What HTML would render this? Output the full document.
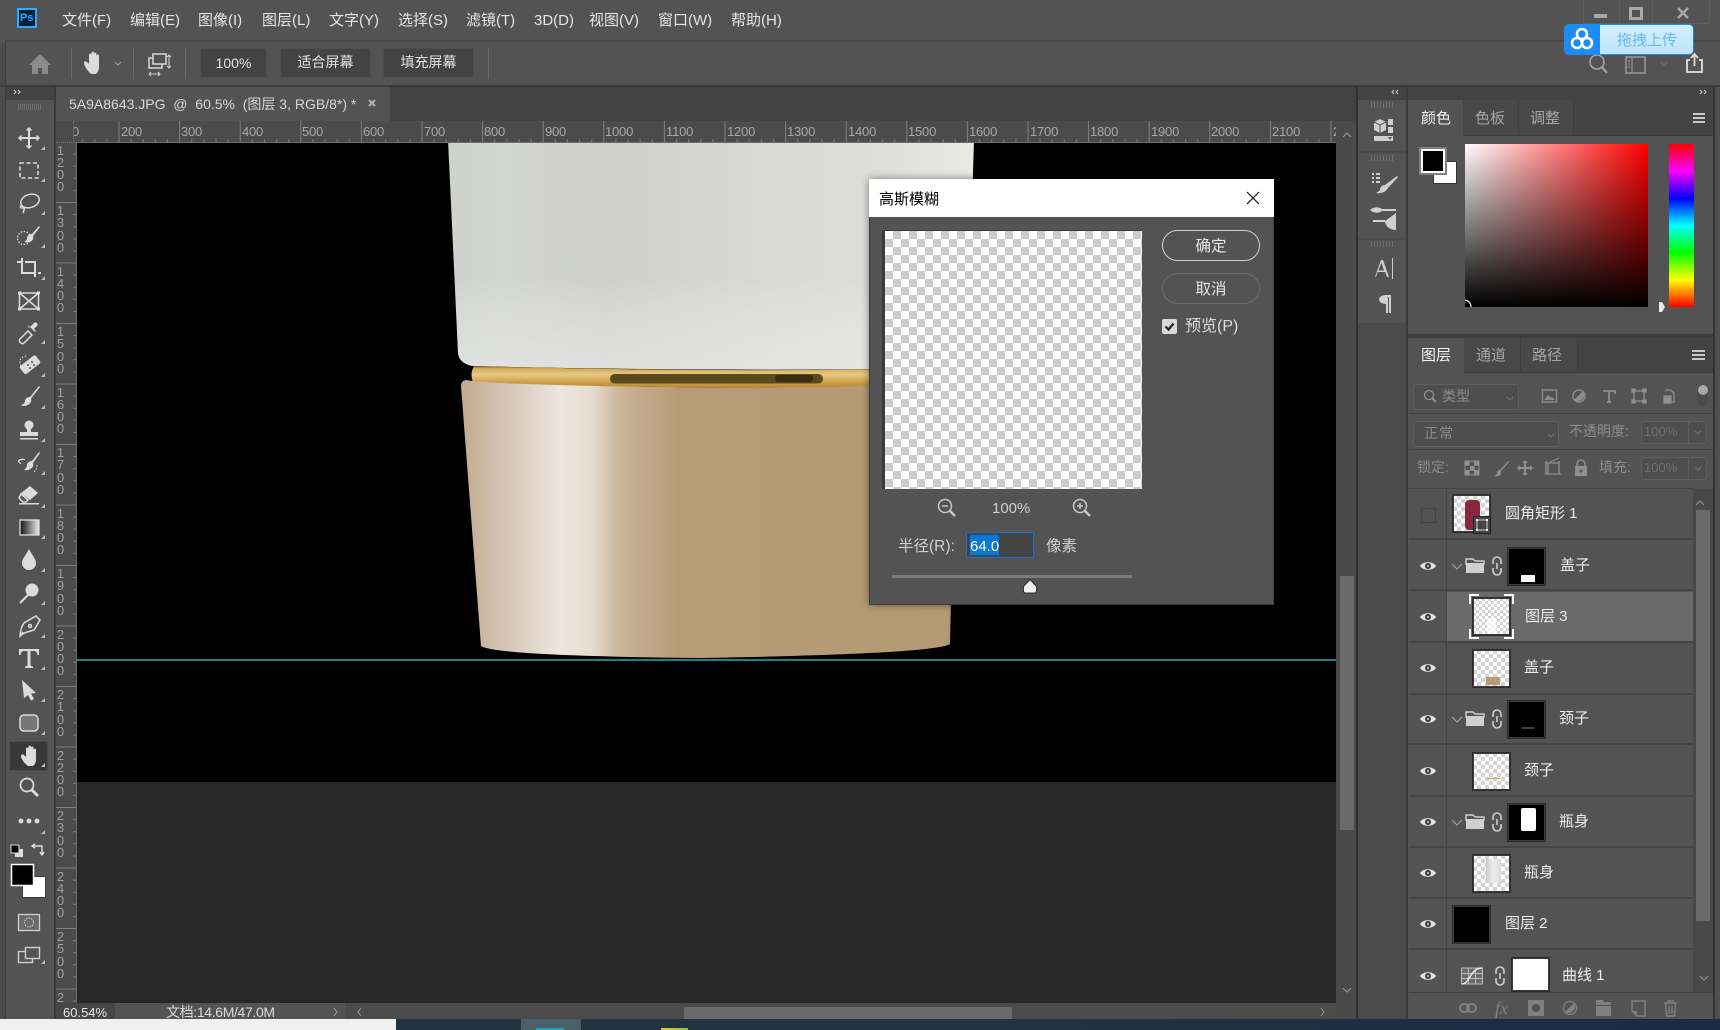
<!DOCTYPE html>
<html lang="zh"><head><meta charset="utf-8"><title>Photoshop</title>
<style>
html,body{margin:0;padding:0;width:1720px;height:1030px;overflow:hidden;background:#535353}
body{position:relative;font-family:"Liberation Sans","Noto Sans CJK SC",sans-serif;color:#e4e4e4;font-size:15px}
.b{position:absolute;box-sizing:border-box}
.t{position:absolute;white-space:nowrap;line-height:20px}
.dim{color:#8c8c8c}
.btn{position:absolute;box-sizing:border-box;background:#434343;border:1px solid #4e4e4e;border-radius:2px;text-align:center;line-height:27px;height:30px;top:48px;color:#e2e2e2;font-size:14px}
#hr span{position:absolute;top:2px;line-height:18px;font-size:13px;color:#a8a8a8;letter-spacing:-.2px}
#vr div{position:absolute;left:0;width:9px;text-align:center;font-size:13px;line-height:12.3px;color:#a0a0a0}
.thumb{position:absolute;box-sizing:border-box;width:39px;height:39px;border:1px solid #2c2c2c;box-shadow:inset 0 0 0 1px #3a3a3a;background:repeating-conic-gradient(#d4d4d4 0 25%,#fff 0 50%) 0 0/8px 8px}
.sep{position:absolute;left:1409px;width:284px;height:2px;background:#444}
.rt{position:absolute;white-space:nowrap;line-height:20px;font-size:15px;color:#ececec}
svg{position:absolute;left:0;top:0}
</style></head><body>

<!-- title + options bars -->
<div class="b" style="left:0;top:0;width:1720px;height:41px;background:#535353"></div>
<div class="b" style="left:5px;top:40px;width:1715px;height:2px;background:#464646"></div>
<div class="b" style="left:0;top:42px;width:5px;height:988px;background:#4c4c4c"></div>
<div class="b" style="left:5px;top:42px;width:1px;height:980px;background:#3c3c3c"></div>
<div class="b" style="left:6px;top:42px;width:1714px;height:43px;background:#535353"></div>
<div class="b" style="left:0;top:85px;width:1720px;height:2px;background:#3a3a3a"></div>

<!-- menu -->
<div class="b" style="left:17px;top:8px;width:20px;height:20px;background:#001e36;border:2px solid #31a8ff"></div>
<div class="t" style="left:20px;top:8px;font-size:11px;font-weight:700;color:#31a8ff">Ps</div>
<div class="t" style="left:62px;top:11px">文件(F)</div>
<div class="t" style="left:130px;top:11px">编辑(E)</div>
<div class="t" style="left:198px;top:11px">图像(I)</div>
<div class="t" style="left:262px;top:11px">图层(L)</div>
<div class="t" style="left:329px;top:11px">文字(Y)</div>
<div class="t" style="left:398px;top:11px">选择(S)</div>
<div class="t" style="left:466px;top:11px">滤镜(T)</div>
<div class="t" style="left:534px;top:11px">3D(D)</div>
<div class="t" style="left:589px;top:11px">视图(V)</div>
<div class="t" style="left:658px;top:11px">窗口(W)</div>
<div class="t" style="left:731px;top:11px">帮助(H)</div>

<!-- option buttons -->
<div class="btn" style="left:200px;width:67px;line-height:29px">100%</div>
<div class="btn" style="left:280px;width:91px">适合屏幕</div>
<div class="btn" style="left:383px;width:91px">填充屏幕</div>
<div class="b" style="left:71px;top:48px;width:1px;height:31px;background:#6a6a6a"></div>
<div class="b" style="left:133px;top:48px;width:1px;height:31px;background:#6a6a6a"></div>
<div class="b" style="left:185px;top:48px;width:1px;height:31px;background:#6a6a6a"></div>
<div class="b" style="left:488px;top:48px;width:1px;height:31px;background:#6a6a6a"></div>

<!-- window ctrl -->
<div class="b" style="left:1583px;top:0;width:127px;height:24px;border:1px solid #5f5f5f;border-top:0;border-radius:0 0 3px 3px"></div>
<div class="b" style="left:1619px;top:0;width:1px;height:24px;background:#5f5f5f"></div>
<div class="b" style="left:1652px;top:0;width:1px;height:24px;background:#5f5f5f"></div>
<!-- baidu -->
<div class="b" style="left:1564px;top:24px;width:130px;height:31px;background:#1b8df5;border-radius:5px;z-index:3"></div>
<div class="b" style="left:1600px;top:25px;width:93px;height:29px;background:linear-gradient(#d4effc,#bfe6fb);border-radius:0 4px 4px 0;z-index:3"></div>
<div class="t" style="left:1617px;top:31px;color:#66b8f3;font-size:15px;z-index:3">拖拽上传</div>

<!-- tool panel -->
<div class="b" style="left:6px;top:87px;width:48px;height:13px;background:#434343"></div>
<div class="b" style="left:6px;top:100px;width:48px;height:919px;background:#535353"></div>
<div class="b" style="left:54px;top:87px;width:2px;height:932px;background:#383838"></div>
<div class="b" style="left:9px;top:741px;width:39px;height:30px;background:#383838;border:1px solid #4a4a4a;border-radius:2px"></div>

<!-- doc area -->
<div class="b" style="left:56px;top:87px;width:1300px;height:34px;background:#424242"></div>
<div class="b" style="left:56px;top:87px;width:334px;height:34px;background:#535353"></div>
<div class="t" style="left:69px;top:94px;font-size:14px;color:#d6d6d6">5A9A8643.JPG&nbsp; @&nbsp; 60.5%&nbsp; (图层 3, RGB/8*) *</div>

<!-- rulers -->
<div class="b" style="left:56px;top:121px;width:1300px;height:22px;background:#4b4b4b"></div>
<div class="b" style="left:56px;top:143px;width:21px;height:860px;background:#4b4b4b"></div>
<div id="hr" class="b" style="left:74px;top:121px;width:1262px;height:22px;overflow:hidden">
<svg width="1262" height="22"><defs><pattern id="ph" x="-16.1" width="60.6" height="22" patternUnits="userSpaceOnUse"><path d="M.5 0V22M12.6 18V22M24.7 18V22M36.9 18V22M49 18V22" stroke="#7f7f7f" fill="none"/></pattern></defs><rect width="1262" height="22" fill="url(#ph)"/><rect y="21" width="1262" height="1" fill="#6e6e6e"/></svg>
<span style="left:-16px">100</span><span style="left:47px">200</span><span style="left:107px">300</span><span style="left:168px">400</span><span style="left:228px">500</span><span style="left:289px">600</span><span style="left:350px">700</span><span style="left:410px">800</span><span style="left:471px">900</span><span style="left:531px">1000</span><span style="left:592px">1100</span><span style="left:653px">1200</span><span style="left:713px">1300</span><span style="left:774px">1400</span><span style="left:834px">1500</span><span style="left:895px">1600</span><span style="left:956px">1700</span><span style="left:1016px">1800</span><span style="left:1077px">1900</span><span style="left:1137px">2000</span><span style="left:1198px">2100</span><span style="left:1259px">2200</span>
</div>
<div id="vr" class="b" style="left:56px;top:143px;width:21px;height:860px;overflow:hidden">
<svg width="21" height="860"><defs><pattern id="pv" y="-1.5" width="21" height="60.5" patternUnits="userSpaceOnUse"><path d="M0 .5H21M17 12.6H21M17 24.7H21M17 36.8H21M17 49H21" stroke="#7f7f7f" fill="none"/></pattern></defs><rect width="21" height="860" fill="url(#pv)"/><rect x="20" width="1" height="860" fill="#6e6e6e"/></svg>
<div style="top:1.5px">1<br>2<br>0<br>0</div><div style="top:62px">1<br>3<br>0<br>0</div><div style="top:122.5px">1<br>4<br>0<br>0</div><div style="top:183px">1<br>5<br>0<br>0</div><div style="top:243.5px">1<br>6<br>0<br>0</div><div style="top:304px">1<br>7<br>0<br>0</div><div style="top:364.5px">1<br>8<br>0<br>0</div><div style="top:425px">1<br>9<br>0<br>0</div><div style="top:485.5px">2<br>0<br>0<br>0</div><div style="top:546px">2<br>1<br>0<br>0</div><div style="top:606.5px">2<br>2<br>0<br>0</div><div style="top:667px">2<br>3<br>0<br>0</div><div style="top:727.5px">2<br>4<br>0<br>0</div><div style="top:788px">2<br>5<br>0<br>0</div><div style="top:848.5px">2<br>6<br>0<br>0</div>
</div>
<div class="b" style="left:56px;top:121px;width:18px;height:22px;background:#4b4b4b;border-right:1px dotted #777;border-bottom:1px dotted #777"></div>

<!-- canvas -->
<div class="b" style="left:77px;top:143px;width:1259px;height:639px;background:#000"></div>
<div class="b" style="left:77px;top:782px;width:1259px;height:221px;background:#282828"></div>

<!-- canvas scrollbar -->
<div class="b" style="left:1336px;top:121px;width:20px;height:898px;background:#4a4a4a"></div>
<div class="b" style="left:1340px;top:576px;width:14px;height:254px;background:#6a6a6a"></div>
<div class="b" style="left:1356px;top:87px;width:2px;height:932px;background:#2f2f2f"></div>

<!-- status bar -->
<div class="b" style="left:56px;top:1003px;width:59px;height:16px;background:#464646"></div>
<div class="b" style="left:115px;top:1003px;width:230px;height:16px;background:#535353"></div>
<div class="b" style="left:345px;top:1003px;width:991px;height:16px;background:#4b4b4b"></div>
<div class="b" style="left:684px;top:1007px;width:328px;height:12px;background:#6a6a6a"></div>
<div class="t" style="left:63px;top:1003px;font-size:13px;line-height:19px;color:#e8e8e8">60.54%</div>
<div class="t" style="left:166px;top:1003px;font-size:14px;line-height:19px;color:#dcdcdc;letter-spacing:-.35px">文档:14.6M/47.0M</div>

<!-- taskbar -->
<div class="b" style="left:0;top:1019px;width:396px;height:11px;background:#f0f0f0;z-index:4"></div>
<div class="b" style="left:396px;top:1019px;width:1324px;height:11px;background:linear-gradient(90deg,#20343f,#1f3340 50%,#1b2a45);z-index:4"></div>
<div class="b" style="left:521px;top:1019px;width:60px;height:11px;background:#4a6068;z-index:4"></div>
<div class="b" style="left:536px;top:1028px;width:28px;height:2px;background:#1fa2b6;z-index:4"></div>
<div class="b" style="left:661px;top:1028px;width:27px;height:2px;background:linear-gradient(90deg,#f0c52a,#8ac63f);z-index:4"></div>
<div class="t" style="left:1695px;top:1026px;color:#fff;font-size:14px;z-index:4">20:</div>

<!-- right dock -->
<div class="b" style="left:1358px;top:87px;width:362px;height:13px;background:#434343"></div>
<div class="b" style="left:1358px;top:100px;width:48px;height:919px;background:#4b4b4b"></div>
<div class="b" style="left:1358px;top:100px;width:48px;height:51px;background:#535353"></div>
<div class="b" style="left:1358px;top:153px;width:48px;height:85px;background:#535353"></div>
<div class="b" style="left:1358px;top:240px;width:48px;height:83px;background:#535353"></div>
<div class="b" style="left:1406px;top:87px;width:2px;height:932px;background:#3a3a3a"></div>
<div class="b" style="left:1408px;top:100px;width:305px;height:234px;background:#535353"></div>
<div class="b" style="left:1713px;top:87px;width:2px;height:932px;background:#333"></div>
<div class="b" style="left:1715px;top:87px;width:5px;height:932px;background:#4f4f4f"></div>

<!-- color panel -->
<div class="b" style="left:1408px;top:100px;width:305px;height:36px;background:#434343;border-bottom:1px solid #3c3c3c"></div>
<div class="b" style="left:1463px;top:100px;width:110px;height:35px;background:#484848"></div>
<div class="b" style="left:1518px;top:100px;width:1px;height:35px;background:#3e3e3e"></div>
<div class="b" style="left:1573px;top:100px;width:1px;height:35px;background:#3e3e3e"></div>
<div class="b" style="left:1408px;top:100px;width:55px;height:37px;background:#535353"></div>
<div class="t" style="left:1421px;top:109px;color:#f2f2f2">颜色</div>
<div class="t dim" style="left:1475px;top:109px;color:#a6a6a6">色板</div>
<div class="t dim" style="left:1530px;top:109px;color:#a6a6a6">调整</div>
<div class="b" style="left:1433px;top:161px;width:24px;height:23px;background:#fff;border:1px solid #333"></div>
<div class="b" style="left:1419px;top:147px;width:28px;height:28px;background:#808080"></div>
<div class="b" style="left:1421px;top:149px;width:24px;height:24px;background:#000;border:2px solid #fff"></div>
<div class="b" style="left:1465px;top:144px;width:183px;height:163px;background:linear-gradient(to top,#000,rgba(0,0,0,0)),linear-gradient(to right,#fff,#f00)"></div>
<div class="b" style="left:1669px;top:144px;width:25px;height:163px;background:linear-gradient(#f00,#f0f,#00f,#0ff,#0f0,#ff0,#f00)"></div>

<!-- layers panel -->
<div class="b" style="left:1408px;top:334px;width:305px;height:4px;background:#3c3c3c"></div>
<div class="b" style="left:1409px;top:338px;width:304px;height:681px;background:#535353"></div>
<div class="b" style="left:1409px;top:338px;width:304px;height:35px;background:#434343;border-bottom:1px solid #3c3c3c"></div>
<div class="b" style="left:1464px;top:338px;width:113px;height:34px;background:#484848"></div>
<div class="b" style="left:1520px;top:338px;width:1px;height:34px;background:#3e3e3e"></div>
<div class="b" style="left:1577px;top:338px;width:1px;height:34px;background:#3e3e3e"></div>
<div class="b" style="left:1409px;top:338px;width:55px;height:36px;background:#535353"></div>
<div class="t" style="left:1421px;top:346px;color:#f2f2f2">图层</div>
<div class="t" style="left:1476px;top:346px;color:#a6a6a6">通道</div>
<div class="t" style="left:1532px;top:346px;color:#a6a6a6">路径</div>

<div class="b" style="left:1413px;top:384px;width:106px;height:26px;border:1px solid #5f5f5f;border-radius:3px;background:#4e4e4e"></div>
<div class="t dim" style="left:1442px;top:386px;font-size:14px">类型</div>
<div class="b" style="left:1409px;top:413px;width:304px;height:1px;background:#434343"></div>
<div class="b" style="left:1413px;top:421px;width:146px;height:26px;border:1px solid #5f5f5f;border-radius:3px;background:#4e4e4e"></div>
<div class="t dim" style="left:1424px;top:423px;font-size:14px;letter-spacing:1px">正常</div>
<div class="t dim" style="left:1569px;top:421px;font-size:14px">不透明度:</div>
<div class="b" style="left:1641px;top:421px;width:66px;height:23px;border:1px solid #5f5f5f;border-radius:3px;background:#4e4e4e"></div>
<div class="b" style="left:1688px;top:421px;width:1px;height:23px;background:#5f5f5f"></div>
<div class="t" style="left:1644px;top:422px;font-size:13px;color:#6f6f6f">100%</div>
<div class="b" style="left:1409px;top:449px;width:304px;height:1px;background:#434343"></div>
<div class="t dim" style="left:1417px;top:457px;font-size:14px">锁定:</div>
<div class="t dim" style="left:1599px;top:457px;font-size:14px">填充:</div>
<div class="b" style="left:1641px;top:457px;width:66px;height:23px;border:1px solid #5f5f5f;border-radius:3px;background:#4e4e4e"></div>
<div class="b" style="left:1688px;top:457px;width:1px;height:23px;background:#5f5f5f"></div>
<div class="t" style="left:1644px;top:458px;font-size:13px;color:#6f6f6f">100%</div>

<!-- layer rows -->
<div class="b" style="left:1409px;top:488px;width:284px;height:1px;background:#444"></div>
<div class="b" style="left:1447px;top:592px;width:246px;height:49px;background:#6a6a6a"></div>
<div class="sep" style="top:538px"></div><div class="sep" style="top:589px"></div><div class="sep" style="top:641px"></div><div class="sep" style="top:693px"></div><div class="sep" style="top:743px"></div><div class="sep" style="top:795px"></div><div class="sep" style="top:846px"></div><div class="sep" style="top:897px"></div><div class="sep" style="top:948px"></div>
<div class="b" style="left:1446px;top:489px;width:1px;height:503px;background:#444"></div>
<div class="b" style="left:1409px;top:992px;width:304px;height:1px;background:#3e3e3e"></div>
<!-- list scrollbar -->
<div class="b" style="left:1693px;top:489px;width:20px;height:503px;background:#484848"></div>
<div class="b" style="left:1696px;top:510px;width:14px;height:411px;background:#6a6a6a"></div>

<div class="b" style="left:1421px;top:508px;width:15px;height:15px;border:1px solid #444"></div>

<div class="thumb" style="left:1452px;top:494px"><div class="b" style="left:12px;top:5px;width:15px;height:30px;background:#8a2740;border-radius:4px"></div></div>
<div class="b" style="left:1473px;top:516px;width:18px;height:18px;background:#444;border:1px solid #222"></div>
<svg width="1720" height="1030" style="z-index:0"><rect x="1477" y="520" width="10" height="10" fill="none" stroke="#cfcfcf"/><path d="M1476 519h2v2h-2zM1486 519h2v2h-2zM1476 529h2v2h-2zM1486 529h2v2h-2z" fill="#eee"/></svg>
<div class="rt" style="left:1505px;top:504px">圆角矩形 1</div>

<div class="thumb" style="left:1507px;top:547px;background:#000"><div class="b" style="left:13px;top:27px;width:14px;height:7px;background:#fff"></div></div>
<div class="rt" style="left:1560px;top:556px">盖子</div>

<div class="thumb" style="left:1472px;top:597px;background-size:6px 6px"><div class="b" style="left:14px;top:20px;width:9px;height:16px;background:rgba(255,255,255,.7)"></div></div>
<div class="b" style="left:1469px;top:594px;width:45px;height:45px;border:2px solid #fff;clip-path:polygon(0 0,10px 0,10px 10px,35px 10px,35px 0,100% 0,100% 10px,35px 10px,35px 35px,100% 35px,100% 100%,35px 100%,35px 35px,10px 35px,10px 100%,0 100%,0 35px,10px 35px,10px 10px,0 10px)"></div>
<div class="rt" style="left:1525px;top:607px">图层 3</div>

<div class="thumb" style="left:1472px;top:649px"><div class="b" style="left:13px;top:27px;width:14px;height:8px;background:#b89c78"></div></div>
<div class="rt" style="left:1524px;top:658px">盖子</div>

<div class="thumb" style="left:1507px;top:700px;background:#000"><div class="b" style="left:14px;top:26px;width:12px;height:2px;background:#444"></div></div>
<div class="rt" style="left:1559px;top:709px">颈子</div>

<div class="thumb" style="left:1472px;top:752px"><div class="b" style="left:14px;top:25px;width:13px;height:1px;background:#c9a760"></div></div>
<div class="rt" style="left:1524px;top:761px">颈子</div>

<div class="thumb" style="left:1507px;top:803px;background:#000"><div class="b" style="left:13px;top:4px;width:15px;height:23px;background:#fff;border-radius:2px"></div></div>
<div class="rt" style="left:1559px;top:812px">瓶身</div>

<div class="thumb" style="left:1472px;top:854px"><div class="b" style="left:13px;top:4px;width:15px;height:24px;background:linear-gradient(90deg,#ccc,#eee 50%,#d9d9d9)"></div></div>
<div class="rt" style="left:1524px;top:863px">瓶身</div>

<div class="thumb" style="left:1452px;top:905px;background:#000"></div>
<div class="rt" style="left:1505px;top:914px">图层 2</div>

<div class="thumb" style="left:1511px;top:957px;height:35px;background:#fff"></div>
<div class="rt" style="left:1562px;top:966px">曲线 1</div>

<!-- ICON OVERLAY -->
<svg width="1720" height="1030" viewBox="0 0 1720 1030" style="z-index:1">
<defs>
<linearGradient id="gw" gradientUnits="userSpaceOnUse" x1="448" x2="974" y1="0" y2="0"><stop offset="0" stop-color="#cfd1ce"/><stop offset=".1" stop-color="#d3d5d2"/><stop offset=".3" stop-color="#cfd0cd"/><stop offset=".55" stop-color="#d7d7d3"/><stop offset=".78" stop-color="#dcdcd8"/><stop offset="1" stop-color="#e8e8e6"/></linearGradient>
<linearGradient id="gv" x1="0" x2="0" y1="0" y2="1"><stop offset="0" stop-color="#fff" stop-opacity="0"/><stop offset=".6" stop-color="#fff" stop-opacity="0"/><stop offset="1" stop-color="#eef0f0" stop-opacity=".5"/></linearGradient>
<linearGradient id="gc" gradientUnits="userSpaceOnUse" x1="461" x2="956" y1="0" y2="0"><stop offset="0" stop-color="#c2ab8f"/><stop offset=".1" stop-color="#d6c8b8"/><stop offset=".2" stop-color="#ede6df"/><stop offset=".265" stop-color="#e6dccf"/><stop offset=".318" stop-color="#cbb79d"/><stop offset=".36" stop-color="#c2ab8c"/><stop offset=".44" stop-color="#b69b78"/><stop offset=".98" stop-color="#b59a76"/><stop offset="1" stop-color="#a68c6b"/></linearGradient>
<linearGradient id="gr" x1="0" x2="0" y1="0" y2="1"><stop offset="0" stop-color="#5d4d26"/><stop offset=".1" stop-color="#cfa653"/><stop offset=".4" stop-color="#e6cb86"/><stop offset=".75" stop-color="#cfa04a"/><stop offset="1" stop-color="#bb8a2c"/></linearGradient>
<linearGradient id="gg" x1="0" x2="1"><stop offset="0" stop-color="#111"/><stop offset="1" stop-color="#eee"/></linearGradient>
<clipPath id="cv"><rect x="77" y="143" width="1259" height="639"/></clipPath>
<g id="eye"><path d="M-8 0C-5-5 5-5 8 0C5 5-5 5-8 0z" fill="#e2e2e2"/><circle r="3" fill="#3a3a3a"/><circle r="1" fill="#ddd"/></g>
<g id="fold" fill="none" stroke="#cfcfcf"><path d="M-9-7h7l2 2h9v3H-9z" stroke-width="1.4"/><path d="M-9-3H9V7H-9z" fill="#cfcfcf" stroke="none"/><path d="M-23-2l5 5 5-5" stroke="#aaa"/><path d="M18-2V-5a4 4 0 0 1 8 0V-2M18 2V5a4 4 0 0 0 8 0V2M22-3V3" stroke-width="1.6"/></g>
<path id="tri" d="M0 4L4 4L4 0z" fill="#bdbdbd"/>
</defs>

<!-- bottle -->
<g clip-path="url(#cv)">
<path d="M448 140L458 353Q459 363 472 366Q720 372 967 368L974 140z" fill="url(#gw)"/>
<path d="M448 140L458 353Q459 363 472 366Q720 372 967 368L974 140z" fill="url(#gv)"/>
<path d="M474 366Q720 373 960 368L960 385Q720 390 474 384Q469 375 474 366z" fill="url(#gr)"/>
<rect x="610" y="374" width="213" height="9.500" rx="4.700" fill="#5a4a1e"/>
<rect x="775" y="375" width="38" height="7" rx="3" fill="#3a2e12"/>
<path d="M466 380Q480 382 500 383Q700 391 956 384L950 644Q935 654 700 658Q495 656 481 646L461 386Q461 381 466 380z" fill="url(#gc)"/>
<path d="M77 660H1336" stroke="#27d3dc" stroke-width="1.3"/>
</g>

<g fill="#8b8b8b" transform="translate(40,64)"><path d="M0-10L11 1H8V10H2V4H-2V10H-8V1H-11z"/></g>
<g transform="translate(94,63)" fill="#dcdcdc"><path d="M-3 11C-6 8-10 3-10 0c0-2 2-2 3-1l2 2V-8c0-2 2.5-2 2.5 0V-2V-10c0-2 2.5-2 2.5 0V-2V-9c0-2 2.5-2 2.5 0V-2V-7c0-2 2.5-2 2.5 0V3c0 4-1 6-3 8z"/></g>
<path d="M115 62l3 3 3-3" fill="none" stroke="#a8a8a8"/>
<g transform="translate(158,62)" fill="none" stroke="#d2d2d2" stroke-width="1.6"><rect x="-9" y="-4" width="13" height="10"/><rect x="-5" y="-8" width="13" height="10" fill="#535353"/><path d="M11-7V6M9-5l2-2 2 2M9 4l2 2 2-2" stroke-width="1"/><path d="M-9 12H2M-7 10l-2 2 2 2M0 10l2 2-2 2" stroke-width="1"/></g>

<!-- chevrons -->
<g fill="none" stroke="#c8c8c8" stroke-width="1"><path d="M14 90l2 2-2 2M18 90l2 2-2 2"/><path d="M1398 90l-2 2 2 2M1394 90l-2 2 2 2"/><path d="M1700 90l2 2-2 2M1704 90l2 2-2 2"/></g>
<g stroke="#6f6f6f" transform="translate(.5,0)"><path d="M18 104v6M20 104v6M22 104v6M24 104v6M26 104v6M28 104v6M30 104v6M32 104v6M34 104v6M36 104v6M38 104v6M40 104v6"/><path d="M1371 102v6M1374 102v6M1377 102v6M1380 102v6M1383 102v6M1386 102v6M1389 102v6M1392 102v6M1371 155v6M1374 155v6M1377 155v6M1380 155v6M1383 155v6M1386 155v6M1389 155v6M1392 155v6M1371 241v6M1374 241v6M1377 241v6M1380 241v6M1383 241v6M1386 241v6M1389 241v6M1392 241v6"/></g>

<!-- tools -->
<g fill="#dcdcdc" stroke="none">
<path transform="translate(29,138)" d="M0-11l3.5 3.5H1V-1H7.500V-3.500L11 0 7.500 3.500V1H1V7.500H3.500L0 11-3.500 7.500H-1V1H-7.500V3.500L-11 0-7.500-3.500V-1H-1V-7.500H-3.500z"/>
<rect x="20" y="163" width="18" height="15" fill="none" stroke="#dcdcdc" stroke-width="1.6" stroke-dasharray="4 2.5"/>
<g transform="translate(29,203)" fill="none" stroke="#dcdcdc" stroke-width="1.5"><ellipse cx="1" cy="-2" rx="9.500" ry="6.500" transform="rotate(-18 1 -2)"/><path d="M-7 2c-2 1-2 3 0 3s3 0 2 2-1 2 0 3"/></g>
<g transform="translate(29,236)"><circle cx="-5" cy="2" r="6.500" fill="none" stroke="#dcdcdc" stroke-width="1.3" stroke-dasharray="1.500 1.500"/><path d="M10-10L3-2C0-2-2 0-2 2c0 2-1 3-3 4 4 1 8 0 9-3 .5-1 .5-2 0-3L11-9z"/></g>
<g transform="translate(29,268)" fill="none" stroke="#dcdcdc" stroke-width="2"><path d="M-12-6H-7M-7-10V5H7"/><path d="M-4-6H6V9M9 5H12"/></g>
<g transform="translate(29,301)" fill="none" stroke="#dcdcdc" stroke-width="1.5"><rect x="-9.500" y="-8" width="19" height="16"/><path d="M-9.500-8L9.500 8M9.500-8L-9.500 8"/><g fill="#dcdcdc" stroke="none"><rect x="-11" y="-9.500" width="3" height="3"/><rect x="8" y="-9.500" width="3" height="3"/><rect x="-11" y="6.500" width="3" height="3"/><rect x="8" y="6.500" width="3" height="3"/></g></g>
<g transform="translate(29,333)"><path d="M-8 10c-2-1-2-3-1-4l8-8 4 4-8 8c-1 1-2 1-3 0z" fill="none" stroke="#dcdcdc" stroke-width="1.5"/><path d="M0-5l2-2 3-3c2-2 5 1 3 3L5-4l2 2-1 1-7-7z"/></g>
<g transform="translate(29,365)"><rect x="-9" y="-4.500" width="20" height="10" rx="2" transform="rotate(-38)"/><g fill="#555"><circle cx="-1" cy="0" r="1"/><circle cx="3" cy="-3" r="1"/><circle cx="1" cy="3" r="1"/><circle cx="5" cy="0" r="1"/></g><path d="M-6 3C-12-2-9-9-2-9" fill="none" stroke="#dcdcdc" stroke-dasharray="1.500 1.500"/></g>
<path transform="translate(29,397)" d="M10-11L1 0C-2 0-4 2-4 4c0 2-2 3-4 4.500 5 1.500 9-1 10-4 .5-1 .5-2 0-3L11-10z"/>
<g transform="translate(29,430)"><circle cy="-5" r="4.500"/><path d="M-2-2H2V2H9V6H-9V2H-2z"/><rect x="-9" y="8" width="18" height="1.500"/></g>
<g transform="translate(29,463)"><path d="M10-11L3-2C0-2-2 0-2 2c0 2-1 3-3 5 4 1 8-1 9-4 .5-1 .5-2 0-3L11-10z"/><path d="M-11-2c2-2 5-2 7-1M-11-2l4-2M-11-2l3 3" fill="none" stroke="#dcdcdc" stroke-width="1.200"/><path d="M8 2C8 5 7 7 5 9" fill="none" stroke="#dcdcdc" stroke-dasharray="1.500 1.500"/></g>
<g transform="translate(29,496)"><path d="M2-10L10-3 2 4-7-3z" transform="translate(-1,0)"/><path d="M-8-2L-1 4-3 6H-6L-10 2z" fill="none" stroke="#dcdcdc" stroke-width="1.500"/><rect x="-10" y="7" width="20" height="1.500"/></g>
<rect x="20" y="520" width="19" height="15" fill="url(#gg)" stroke="#dcdcdc" stroke-width="1.300"/>
<path transform="translate(29,560)" d="M0-11C-3-5-7-1-7 3a7 7 0 0 0 14 0C7-1 3-5 0-11z"/>
<g transform="translate(29,593)"><circle cx="3" cy="-3" r="6.500"/><path d="M-1 2L-9 10" stroke="#dcdcdc" stroke-width="2"/></g>
<g transform="translate(29,626)" fill="none" stroke="#dcdcdc" stroke-width="1.500"><path d="M7-10L11-6 5 4-5 7-9 10-6 6-9 10C-9 8-8 1-5-3z"/><circle cx="1" cy="0" r="1.500"/></g>
<path transform="translate(29,658)" d="M-10-9H10V-3H8.500C8-6 7-7 5-7H1.500V7C1.500 8 3 8.500 4 8.500V10H-4V8.500C-3 8.500-1.500 8-1.500 7V-7H-5C-7-7-8-6-8.500-3H-10z"/>
<path transform="translate(29,690)" d="M-7-10L7 3 2 3.500 5 9 2 10.500-1 5-5 8z"/>
<rect x="20" y="715" width="18" height="16" rx="4" fill="#777" stroke="#dcdcdc" stroke-width="1.500"/>
<path transform="translate(31,756)" d="M-3 10C-6 8-10 3-10 0c0-2 2-2 3-1l2 2V-7c0-2 2.500-2 2.500 0V-2V-9c0-2 2.500-2 2.500 0V-2V-8c0-2 2.500-2 2.500 0V-2V-6c0-2 2.500-2 2.500 0V3c0 4-1 5-3 7z"/>
<g transform="translate(29,787)" fill="none" stroke="#dcdcdc"><circle cx="-2" cy="-2" r="6.500" stroke-width="1.700"/><path d="M3 3L9 9" stroke-width="3"/></g>
<circle cx="21" cy="821" r="2.400"/><circle cx="29" cy="821" r="2.400"/><circle cx="37" cy="821" r="2.400"/>
<rect x="15" y="849" width="8" height="8" fill="#dcdcdc"/><rect x="11" y="845" width="8" height="8" fill="#000" stroke="#dcdcdc"/>
<g fill="none" stroke="#dcdcdc" stroke-width="1.400"><path d="M33 846H42V854"/><path d="M35 844l-3 2 3 2M40 852l2 3 2-3"/></g>
</g>
<rect x="22.500" y="876.500" width="23" height="21" fill="#fff" stroke="#3a3a3a"/>
<rect x="11.500" y="864.500" width="22" height="21" fill="#000" stroke="#fff" stroke-width="1.500"/>
<rect x="18.500" y="914.500" width="21" height="16" fill="#6a6a6a" stroke="#d0d0d0" stroke-width="1.300"/>
<circle cx="29" cy="922.500" r="4.500" fill="none" stroke="#e0e0e0" stroke-dasharray="1.300 1.300"/>
<g fill="none" stroke="#d0d0d0" stroke-width="1.400"><rect x="18.500" y="951.500" width="14" height="11"/><rect x="25.500" y="947.500" width="14" height="11" fill="#535353"/></g>
<g>
<use href="#tri" x="41" y="146"/><use href="#tri" x="41" y="178"/><use href="#tri" x="41" y="211"/><use href="#tri" x="41" y="244"/><use href="#tri" x="41" y="276"/><use href="#tri" x="41" y="340"/><use href="#tri" x="41" y="373"/><use href="#tri" x="41" y="405"/><use href="#tri" x="41" y="438"/><use href="#tri" x="41" y="471"/><use href="#tri" x="41" y="504"/><use href="#tri" x="41" y="535"/><use href="#tri" x="41" y="568"/><use href="#tri" x="41" y="601"/><use href="#tri" x="41" y="634"/><use href="#tri" x="41" y="666"/><use href="#tri" x="41" y="698"/><use href="#tri" x="41" y="731"/><use href="#tri" x="41" y="763"/><use href="#tri" x="41" y="830"/><use href="#tri" x="41" y="960"/>
</g>

<!-- canvas tab close + scrollbars arrows -->
<path d="M369 100l6 6M375 100l-6 6" stroke="#b4b4b4" stroke-width="2"/>
<g fill="none" stroke="#9a9a9a"><path d="M1343 137l4-4 4 4M1343 988l4 4 4-4M334 1008l3 4-3 4M361 1008l-3 4 3 4M1321 1008l3 4-3 4M1696 505l4-4 4 4M1700 976l4 4 4-4"/></g>

<!-- window icons -->
<rect x="1594" y="14" width="13" height="4" fill="#a8a8a8"/>
<rect x="1630.500" y="8.500" width="11" height="10" fill="none" stroke="#a8a8a8" stroke-width="3"/>
<path d="M1678 8l10 10M1688 8l-10 10" stroke="#a8a8a8" stroke-width="2.500"/>
<g fill="none" stroke="#a6a6a6"><circle cx="1597" cy="62" r="7" stroke-width="1.500"/><path d="M1602 67l5 6" stroke-width="2"/><rect x="1626" y="57" width="19" height="16" stroke-width="1.300"/><path d="M1632 57v16M1628 61h2M1628 64h2M1628 67h2"/><path d="M1661 62l3 3 3-3" stroke="#6e6e6e"/></g>
<g fill="none" stroke="#e0e0e0" stroke-width="1.800"><path d="M1690 60h-3v12h15V60h-3"/><path d="M1694.500 66V55M1691 58l3.500-4 3.500 4"/></g>

<!-- dock icons -->
<g fill="#cfcfcf">
<path d="M1380 119l6 3v8l-6 3-6-3v-8z"/><path d="M1374 122l6 3 6-3M1380 125v8" stroke="#535353" fill="none"/>
<rect x="1388" y="119" width="5" height="6"/><rect x="1388" y="127" width="5" height="6"/><rect x="1374" y="136" width="19" height="5"/><path d="M1388 137h4l-2 3z" fill="#555"/>
<path d="M1372 173h2v2h-2zM1376 173h4v2h-4zM1372 177h2v2h-2zM1376 177h4v2h-4zM1372 181h2v2h-2zM1376 181h4v2h-4z"/>
<path d="M1397 176L1385 185C1382 185 1380 187 1380 190C1379 191 1378 192 1376 193C1381 194 1386 192 1388 188L1398 177z"/>
<g transform="translate(0,-2)">
<path d="M1370 212C1373 209 1378 208 1382 211V213C1378 216 1373 215 1370 212z"/><rect x="1382" y="211" width="14" height="2"/>
<rect x="1373" y="222" width="12" height="2"/><path d="M1396 215V232C1390 232 1385 228 1385 223C1388 221 1392 218 1396 215z"/>
</g>
<path d="M1375 277l6-17h2l6 17h-2l-1.700-5h-7.600l-1.700 5zM1378.500 270.500h5.500l-2.700-8z"/><rect x="1392" y="258" width="1" height="21"/>
<path d="M1386 295h5v18h-2v-16h-1v16h-2v-9c-4 0-7-2-7-4.500s3-4.500 7-4.500z"/>
</g>

<!-- color panel icons -->
<g fill="#c8c8c8"><rect x="1693" y="113" width="12" height="2"/><rect x="1693" y="117" width="12" height="2"/><rect x="1693" y="121" width="12" height="2"/>
<rect x="1692" y="350" width="13" height="2"/><rect x="1692" y="354" width="13" height="2"/><rect x="1692" y="358" width="13" height="2"/></g>
<path d="M1659 302h3l3 5-3 5h-3z" fill="#e8e8e8"/>
<path d="M1465 300a7 7 0 0 1 6 7" fill="none" stroke="#fff" stroke-width="1.200"/>

<!-- layer filter icons -->
<g fill="none" stroke="#8f8f8f" stroke-width="1.300">
<circle cx="1429" cy="395" r="4.500"/><path d="M1432 398l4 4" stroke-width="2"/>
<path d="M1507 397l3 3 3-3" stroke="#6d6d6d"/>
<rect x="1542.500" y="390" width="14" height="12"/><path d="M1544 400l4-5 3 3 1-1 3 3z" fill="#8f8f8f" stroke="none"/>
<circle cx="1579" cy="396" r="6"/><path d="M1583 392a6 6 0 0 1-8 8z" fill="#8f8f8f"/>
<path d="M1603 391h12v3M1609 391v11M1607 402h4" stroke-width="1.800"/>
<rect x="1634" y="391" width="10" height="10"/><rect x="1632" y="389" width="3" height="3" fill="#8f8f8f"/><rect x="1643" y="389" width="3" height="3" fill="#8f8f8f"/><rect x="1632" y="400" width="3" height="3" fill="#8f8f8f"/><rect x="1643" y="400" width="3" height="3" fill="#8f8f8f"/>
<path d="M1665 390h6l3 3v9h-8"/><rect x="1664" y="396" width="7" height="7" fill="#8f8f8f"/>
<path d="M1548 434l3 3 3-3M1695 431l3 3 3-3M1695 467l3 3 3-3" stroke="#6d6d6d"/>
<rect x="1698" y="385" width="9" height="21" rx="4.500" stroke="#4a4a4a" fill="#4a4a4a"/>
</g>
<circle cx="1703" cy="390" r="5" fill="#a8a8a8"/>

<!-- lock icons -->
<g fill="#8f8f8f">
<rect x="1465" y="461" width="14" height="14" fill="none" stroke="#8f8f8f"/><rect x="1465" y="461" width="4.700" height="4.700"/><rect x="1474" y="461" width="4.700" height="4.700"/><rect x="1470" y="466" width="4.700" height="4.700"/><rect x="1465" y="470" width="4.700" height="4.700"/><rect x="1474" y="470" width="4.700" height="4.700"/>
<path d="M1508 461L1500 470c-2 0-3 1-3 3 0 1-1 2-3 3 3 1 6 0 7-2v-3l8-9z"/>
<path transform="translate(1525,468)" d="M0-8l3 3H1V-1H5V-3L8 0 5 3V1H1V5H3L0 8-3 5H-1V1H-5V3L-8 0-5-3V-1H-1V-5H-3z"/>
<path d="M1546 463h13v11h-11v-11M1546 461v13M1559 461v13M1545 474h16" fill="none" stroke="#8f8f8f" stroke-width="1.300"/><path d="M1550 462l9-4" stroke="#8f8f8f"/>
<path d="M1575 466h12v10h-12z"/><path d="M1577 466v-2a4 4 0 0 1 8 0v2" fill="none" stroke="#8f8f8f" stroke-width="1.600"/><circle cx="1581" cy="471" r="1.500" fill="#535353"/>
</g>

<!-- eyes and folders -->
<use href="#eye" x="1428" y="566"/><use href="#eye" x="1428" y="617"/><use href="#eye" x="1428" y="668"/><use href="#eye" x="1428" y="719"/><use href="#eye" x="1428" y="771"/><use href="#eye" x="1428" y="822"/><use href="#eye" x="1428" y="873"/><use href="#eye" x="1428" y="924"/><use href="#eye" x="1428" y="976"/>
<use href="#fold" x="1475" y="566"/><use href="#fold" x="1475" y="719"/><use href="#fold" x="1475" y="822"/>
<g transform="translate(1472,976)" fill="none" stroke="#bdbdbd"><rect x="-10.500" y="-8" width="21" height="16" fill="#6a6a6a"/><path d="M-10-2.500H10M-10 2.500H10M-3.500-8V8M3.500-8V8"/><path d="M-10 8C-2 8-2-8 10-8" stroke="#eee" stroke-width="1.400"/></g>
<path d="M1496 974V971a4 4 0 0 1 8 0V974M1496 978V981a4 4 0 0 0 8 0V978M1500 973V979" fill="none" stroke="#cfcfcf" stroke-width="1.600"/>

<!-- bottom layer icons -->
<g fill="#808080" stroke="none">
<g fill="none" stroke="#808080" stroke-width="2"><rect x="1460" y="1004" width="9" height="8" rx="4"/><rect x="1467" y="1004" width="9" height="8" rx="4"/></g>
<path d="M1528 1000h16v16h-16z"/><circle cx="1536" cy="1008" r="4" fill="#535353"/>
<circle cx="1570" cy="1008" r="6.500" fill="none" stroke="#808080" stroke-width="1.300"/><path d="M1574 1003a6.500 6.500 0 0 1-9 9z"/>
<path d="M1596 1000h7l1 2h7v3h-15zM1596 1006h15v10h-15z"/>
<path d="M1632 1001h13v15h-8l-5-5z" fill="none" stroke="#808080" stroke-width="1.500"/><path d="M1632 1011h5v5z"/>
<g fill="none" stroke="#808080" stroke-width="1.400"><path d="M1664 1003h13M1668 1003v-2h5v2M1665.500 1003l1 13h8l1-13M1669 1006v8M1672 1006v8"/></g>
</g>
</svg>
<div class="t" style="left:1495px;top:998px;font-size:18px;font-style:italic;color:#808080;z-index:2;font-family:'Liberation Serif',serif">fx</div>

<!-- baidu icon above -->
<svg width="1720" height="1030" style="z-index:4;pointer-events:none"><g fill="none" stroke="#fff" stroke-width="2.600"><circle cx="1582" cy="34" r="5"/><circle cx="1577" cy="43" r="5"/><circle cx="1587" cy="43" r="5"/></g></svg>

<!-- DIALOG -->
<div class="b" style="left:869px;top:179px;width:405px;height:426px;background:#535353;box-shadow:0 0 8px rgba(0,0,0,.45);z-index:5;border:1px solid #3c3c3c;border-top:0">
 <div class="b" style="left:-1px;top:0;width:405px;height:38px;background:#fff"></div>
 <div class="t" style="left:9px;top:11px;color:#000;font-size:15px">高斯模糊</div>
 <svg width="14" height="14" style="left:376px;top:12px"><path d="M1 1L13 13M13 1L1 13" stroke="#111" stroke-width="1.200"/></svg>
 <div class="b" style="left:12px;top:51px;width:260px;height:259px;border-left:3px solid #3a3a3a;border-top:1px solid #3a3a3a;background:repeating-conic-gradient(#ccc 0 25%,#fff 0 50%) 0 0/16px 16px"></div>
 <div class="b" style="left:292px;top:51px;width:98px;height:31px;border:1.500px solid #cfcfcf;border-radius:16px;text-align:center;line-height:31px;color:#e6e6e6;font-size:15.500px">确定</div>
 <div class="b" style="left:292px;top:94px;width:98px;height:31px;border:1.500px solid #6e6e6e;border-radius:16px;text-align:center;line-height:31px;color:#e6e6e6;font-size:15.500px">取消</div>
 <div class="b" style="left:292px;top:140px;width:15px;height:15px;background:#d8d8d8;border-radius:2px"></div>
 <svg width="15" height="15" style="left:292px;top:140px"><path d="M3.500 7.500l3 3 5-6" fill="none" stroke="#222" stroke-width="2.200"/></svg>
 <div class="t" style="left:315px;top:138px;color:#dcdcdc;font-size:16px">预览(P)</div>
 <svg width="20" height="20" style="left:67px;top:319px"><g fill="none" stroke="#c8c8c8"><circle cx="8" cy="8" r="6.500" stroke-width="1.500"/><path d="M5 8h6" stroke-width="1.500"/><path d="M13 13l5 5" stroke-width="2.500"/></g></svg>
 <svg width="20" height="20" style="left:202px;top:319px"><g fill="none" stroke="#c8c8c8"><circle cx="8" cy="8" r="6.500" stroke-width="1.500"/><path d="M5 8h6M8 5v6" stroke-width="1.500"/><path d="M13 13l5 5" stroke-width="2.500"/></g></svg>
 <div class="t" style="left:122px;top:320px;color:#cfcfcf;font-size:15px">100%</div>
 <div class="t" style="left:28px;top:358px;color:#cfcfcf;font-size:15.500px">半径(R):</div>
 <div class="b" style="left:96px;top:353px;width:68px;height:26px;background:#444;border:1px solid #1473d3"></div>
 <div class="b" style="left:100px;top:356px;width:29px;height:20px;background:#0a78d7"></div>
 <div class="t" style="left:100px;top:358px;color:#fff;font-size:15px">64.0</div>
 <div class="t" style="left:176px;top:358px;color:#cfcfcf;font-size:15.500px">像素</div>
 <div class="b" style="left:22px;top:396px;width:240px;height:3px;background:#7a7a7a"></div>
 <svg width="16" height="16" style="left:152px;top:400px"><path d="M8 .5L14.500 7.500Q15 14 13 14H3Q1 14 1.500 7.500z" fill="#f2f2f2" stroke="#2e2e2e"/></svg>
</div>
</body></html>
